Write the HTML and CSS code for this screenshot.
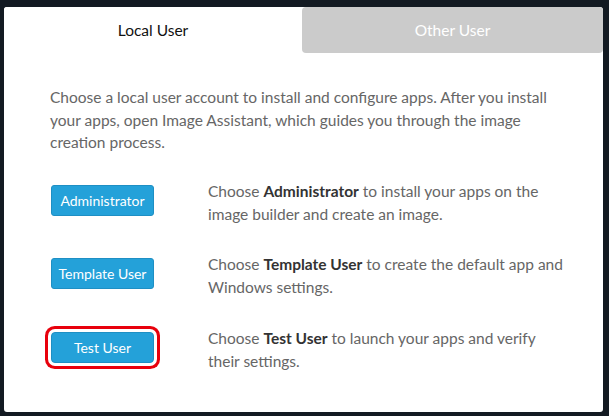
FILE: index.html
```html
<!DOCTYPE html>
<html lang="en">
<head>
    <meta charset="UTF-8">
    <title>Local User</title>
    <link rel="stylesheet" href="styles.css">
</head>
<body>
    <div class="panel">
        <div class="tabs">
            <div class="tab active">Local User</div>
            <div class="tab">Other User</div>
        </div>
        <div class="content">
            <p class="intro">Choose a local user account to install and configure apps. After you install your apps, open Image Assistant, which guides you through the image creation process.</p>
            <div class="row">
                <button class="btn">Administrator</button>
                <p class="desc">Choose <b>Administrator</b> to install your apps on the image builder and create an image.</p>
            </div>
            <div class="row">
                <button class="btn">Template User</button>
                <p class="desc">Choose <b>Template User</b> to create the default app and Windows settings.</p>
            </div>
            <div class="row">
                <button class="btn marked">Test User</button>
                <p class="desc">Choose <b>Test User</b> to launch your apps and verify their settings.</p>
            </div>
        </div>
    </div>
</body>
</html>
```
FILE: styles.css
```css
body {
    margin: 0;
    padding: 7px 6px 4px 4px;
    background-color: #131a22;
    font-family: 'Lato', sans-serif;
    font-size: 15.5px;
    color: #666;
}
.panel {
    background-color: #fff;
    border-radius: 3px;
    height: 405px;
}
.tabs {
    display: grid;
    grid-template-columns: 298px 1fr;
}
.tab {
    height: 46px;
    display: flex;
    align-items: center;
    justify-content: center;
    color: #fff;
    background-color: #cbcbcb;
    border-radius: 4px;
}
.tab.active {
    color: #111;
    background-color: #fff;
    border-radius: 3px 0 0 0;
}
.content {
    padding: 33px 40px 0 46px;
}
.intro {
    margin: 0 0 26px;
    line-height: 22.5px;
}
.row {
    display: flex;
    align-items: flex-start;
    height: 73.5px;
}
.btn {
    width: 103px;
    height: 31px;
    margin: 5px 54px 0 1px;
    padding: 0;
    border: 1px solid #1e8fc4;
    border-radius: 3px;
    background-color: #24a1d9;
    color: #fff;
    font-family: inherit;
    font-size: 14px;
    flex-shrink: 0;
}
.btn.marked {
    box-shadow: 0 0 0 3px #fff, 0 0 0 6px #e8000c;
    border-radius: 4px;
}
.desc {
    margin: 0;
    line-height: 23px;
}
.desc b {
    color: #333;
    font-weight: 700;
}
```
